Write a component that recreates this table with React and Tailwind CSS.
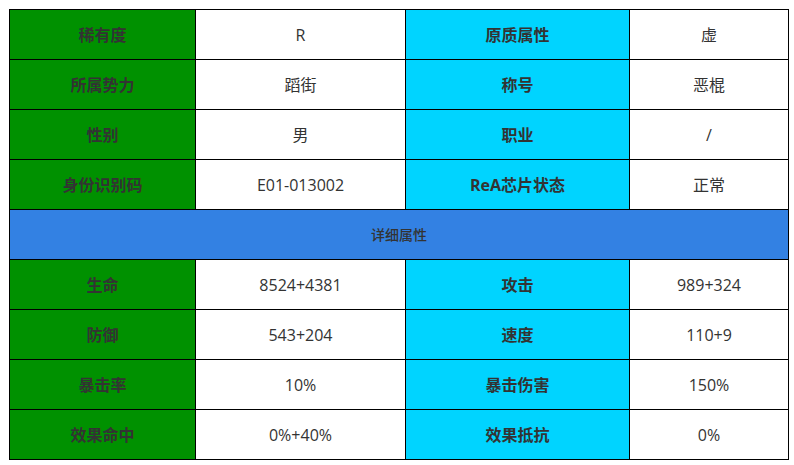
export default function App() {
  const top = [
    ['稀有度', 'R', '原质属性', '虚'],
    ['所属势力', '蹈街', '称号', '恶棍'],
    ['性别', '男', '职业', '/'],
    ['身份识别码', 'E01-013002', 'ReA芯片状态', '正常'],
  ];
  const stats = [
    ['生命', '8524+4381', '攻击', '989+324'],
    ['防御', '543+204', '速度', '110+9'],
    ['暴击率', '10%', '暴击伤害', '150%'],
    ['效果命中', '0%+40%', '效果抵抗', '0%'],
  ];

  const renderRow = (r, i) => (
    <tr key={i} className="h-[50px]">
      <td className="w-[186px] border border-black bg-[#009100] text-center font-bold">{r[0]}</td>
      <td className="w-[210px] border border-black bg-white text-center">{r[1]}</td>
      <td className="w-[224px] border border-black bg-[#00d4ff] text-center font-bold">{r[2]}</td>
      <td className="w-[159px] border border-black bg-white text-center">{r[3]}</td>
    </tr>
  );

  return (
    <div className="min-h-screen bg-white p-[9px] font-['Open_Sans','Noto_Sans_CJK_SC',sans-serif] text-[16px] text-[#333]">
      <table className="w-[780px] table-fixed border-collapse">
        <tbody>
          {top.map(renderRow)}
          <tr className="h-[50px]">
            <td colSpan={4} className="border border-black bg-[#3381e3] text-center text-[14px] font-medium">
              详细属性
            </td>
          </tr>
          {stats.map(renderRow)}
        </tbody>
      </table>
    </div>
  );
}
